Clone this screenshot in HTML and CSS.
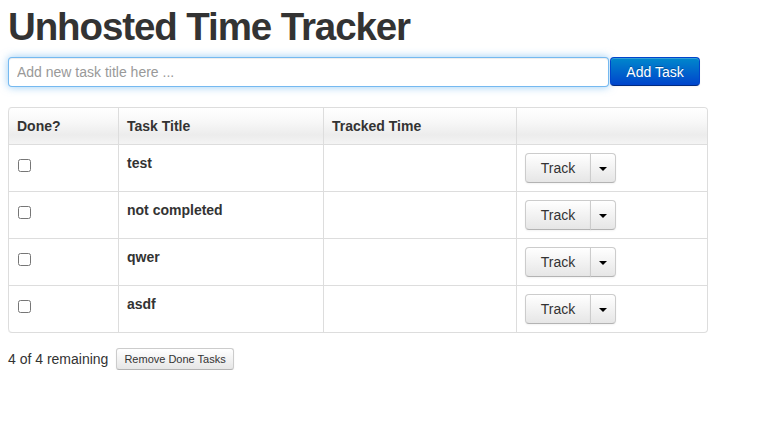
FILE: index.html
```html
<!DOCTYPE html>
<html>
<head>
<meta charset="utf-8">
<title>Unhosted Time Tracker</title>
<link rel="stylesheet" href="styles.css">
</head>
<body>
<div class="page">
  <h1 class="title">Unhosted Time Tracker</h1>
  <form class="add-form">
    <input class="task-input" type="text" placeholder="Add new task title here ...">
    <button class="btn btn-primary" type="button">Add Task</button>
  </form>
  <table class="tasks">
    <colgroup>
      <col class="c1"><col class="c2"><col class="c3"><col class="c4">
    </colgroup>
    <thead>
      <tr><th>Done?</th><th>Task Title</th><th>Tracked Time</th><th></th></tr>
    </thead>
    <tbody>
      <tr>
        <td><input class="check" type="checkbox"></td>
        <td class="name">test</td>
        <td></td>
        <td><div class="btn-group"><button class="btn track" type="button">Track</button><button class="btn toggle" type="button"><span class="caret"></span></button></div></td>
      </tr>
      <tr>
        <td><input class="check" type="checkbox"></td>
        <td class="name">not completed</td>
        <td></td>
        <td><div class="btn-group"><button class="btn track" type="button">Track</button><button class="btn toggle" type="button"><span class="caret"></span></button></div></td>
      </tr>
      <tr>
        <td><input class="check" type="checkbox"></td>
        <td class="name">qwer</td>
        <td></td>
        <td><div class="btn-group"><button class="btn track" type="button">Track</button><button class="btn toggle" type="button"><span class="caret"></span></button></div></td>
      </tr>
      <tr>
        <td><input class="check" type="checkbox"></td>
        <td class="name">asdf</td>
        <td></td>
        <td><div class="btn-group"><button class="btn track" type="button">Track</button><button class="btn toggle" type="button"><span class="caret"></span></button></div></td>
      </tr>
    </tbody>
  </table>
  <div class="footer">
    <span class="remaining">4 of 4 remaining</span>
    <button class="btn btn-small" type="button">Remove Done Tasks</button>
  </div>
</div>
</body>
</html>
```

FILE: styles.css
```css
html, body {
  margin: 0;
  padding: 0;
  background: #fff;
}
body {
  font-family: "Liberation Sans", Arial, sans-serif;
  font-size: 14px;
  line-height: 20px;
  color: #333;
}
.page {
  padding: 7px 8px 0 8px;
}
.title {
  margin: 0 0 10px 0;
  font-size: 38.5px;
  line-height: 40px;
  font-weight: bold;
  letter-spacing: -1.1px;
  color: #333;
}
.add-form {
  display: flex;
  gap: 1px;
  margin: 0 0 20px 0;
  align-items: flex-start;
}
.task-input {
  box-sizing: border-box;
  width: 601px;
  height: 30px;
  padding: 4px 8px;
  font-family: inherit;
  font-size: 14px;
  color: #555;
  border: 1px solid rgba(82, 168, 236, 0.8);
  border-radius: 4px;
  box-shadow: inset 0 1px 1px rgba(0,0,0,.075), 0 0 8px rgba(82, 168, 236, 0.6);
  outline: none;
}
.task-input::placeholder {
  color: #999;
}
.btn {
  box-sizing: border-box;
  font-family: inherit;
  font-size: 14px;
  line-height: 20px;
  color: #333;
  padding: 4px 12px;
  border: 1px solid #ccc;
  border-bottom-color: #b3b3b3;
  border-radius: 4px;
  background: linear-gradient(#ffffff, #e6e6e6);
  box-shadow: inset 0 1px 0 rgba(255,255,255,.2), 0 1px 2px rgba(0,0,0,.05);
  cursor: pointer;
}
.btn-primary {
  width: 90px;
  height: 29px;
  color: #fff;
  border-color: #0044cc #0044cc #002a80;
  background: linear-gradient(#0088cc, #0044cc);
  text-shadow: 0 -1px 0 rgba(0,0,0,.25);
}
.tasks {
  box-sizing: border-box;
  width: 700px;
  table-layout: fixed;
  border-collapse: separate;
  border-spacing: 0;
  border: 1px solid #ddd;
  border-left: 0;
  border-radius: 4px;
}
.c1 { width: 110px; }
.c2 { width: 205px; }
.c3 { width: 193px; }
.c4 { width: 191px; }
.tasks th, .tasks td {
  padding: 8px;
  line-height: 20px;
  text-align: left;
  vertical-align: top;
  border-left: 1px solid #ddd;
  border-top: 1px solid #ddd;
}
.tasks thead th {
  border-top: 0;
  font-weight: bold;
  background: linear-gradient(#ffffff 0%, #f7f7f7 40%, #ececec 75%, #f4f4f4 100%);
}
.tasks thead th:first-child { border-top-left-radius: 4px; }
.tasks thead th:last-child { border-top-right-radius: 4px; }
.tasks tbody tr:last-child td:first-child { border-bottom-left-radius: 4px; }
.tasks tbody tr:last-child td:last-child { border-bottom-right-radius: 4px; }
.name {
  font-weight: bold;
}
.check {
  display: block;
  width: 13px;
  height: 13px;
  margin: 6px 0 0 1px;
}
.btn-group {
  display: flex;
}
.btn-group .track {
  width: 66px;
  height: 30px;
  border-radius: 4px 0 0 4px;
  padding: 4px 0;
}
.btn-group .toggle {
  width: 26px;
  height: 30px;
  margin-left: -1px;
  border-radius: 0 4px 4px 0;
  padding: 0;
  display: flex;
  align-items: center;
  justify-content: center;
}
.caret {
  display: block;
  width: 0;
  height: 0;
  margin-top: 1px;
  border-top: 4px solid #000;
  border-left: 4px solid transparent;
  border-right: 4px solid transparent;
}
.footer {
  display: flex;
  align-items: center;
  gap: 8px;
  margin-top: 15px;
}
.btn-small {
  height: 22px;
  padding: 1px 7px;
  font-size: 11px;
  line-height: 18px;
  border-radius: 3px;
}
```
